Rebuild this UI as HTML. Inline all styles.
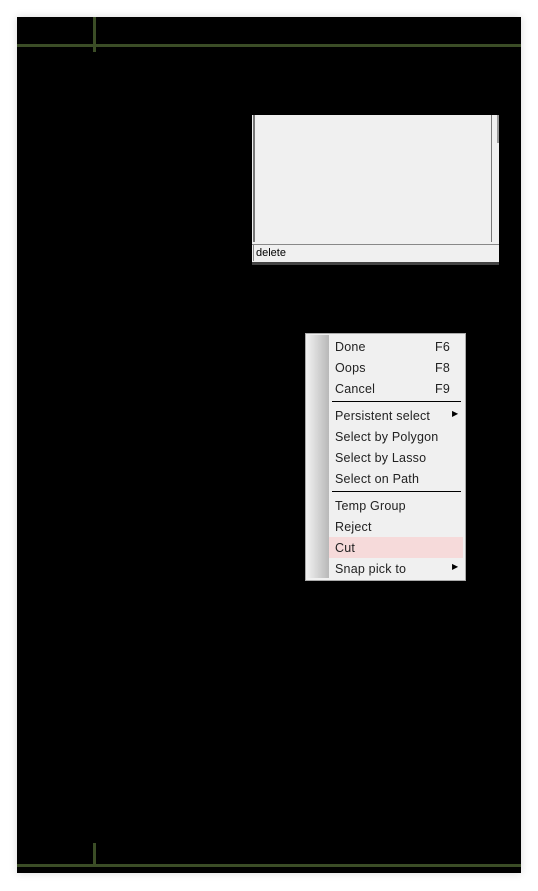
<!DOCTYPE html><html><head><style>
body{margin:0;width:538px;height:891px;background:#fff;position:relative;overflow:hidden;font-family:"Liberation Sans",sans-serif}
.a{position:absolute}
.m{font-size:12.5px;color:#222;left:335px;letter-spacing:0.2px}
</style></head><body>
<div class="a" style="left:17px;top:17px;width:504px;height:856px;background:#000;box-shadow:0 0 8px rgba(0,0,0,.15)"></div>
<div class="a" style="left:17px;top:44px;width:504px;height:3px;background:#3b4d26"></div>
<div class="a" style="left:93px;top:17px;width:3px;height:35px;background:#3b4d26"></div>
<div class="a" style="left:17px;top:864px;width:504px;height:3px;background:#3b4d26"></div>
<div class="a" style="left:93px;top:843px;width:3px;height:22px;background:#3b4d26"></div>
<div class="a" style="left:252px;top:115px;width:247px;height:148px;background:#f0f0f0"></div>
<div class="a" style="left:253px;top:115px;width:2px;height:127px;background:#777"></div>
<div class="a" style="left:491px;top:115px;width:1px;height:127px;background:#777"></div>
<div class="a" style="left:497px;top:115px;width:2px;height:28px;background:#999"></div>
<div class="a" style="left:252px;top:244px;width:247px;height:1px;background:#888"></div>
<div class="a" style="left:253px;top:245px;width:1px;height:16px;background:#888"></div>
<div class="a" style="left:252px;top:262px;width:247px;height:3px;background:#444"></div>
<div class="a" style="left:256px;top:247px;font-size:11px;color:#000">delete</div>
<div class="a" style="left:305px;top:333px;width:159px;height:246px;background:#f0f0f0;border:1px solid #aaa"></div>
<div class="a" style="left:307px;top:335px;width:22px;height:243px;background:linear-gradient(90deg,#f0f0f0,#b8b8b8)"></div>
<div class="a" style="left:329px;top:537px;width:134px;height:21px;background:#f6dada"></div>
<div class="a" style="left:332px;top:401px;width:129px;height:1px;background:#000"></div>
<div class="a" style="left:332px;top:491px;width:129px;height:1px;background:#000"></div>
<div class="a m" style="top:340px">Done</div><div class="a m" style="left:435px;top:340px">F6</div>
<div class="a m" style="top:361px">Oops</div><div class="a m" style="left:435px;top:361px">F8</div>
<div class="a m" style="top:382px">Cancel</div><div class="a m" style="left:435px;top:382px">F9</div>
<div class="a m" style="top:409px">Persistent select</div><div class="a" style="left:452px;top:409px;font-size:8px">▶</div>
<div class="a m" style="top:430px">Select by Polygon</div>
<div class="a m" style="top:451px">Select by Lasso</div>
<div class="a m" style="top:472px">Select on Path</div>
<div class="a m" style="top:499px">Temp Group</div>
<div class="a m" style="top:520px">Reject</div>
<div class="a m" style="top:541px">Cut</div>
<div class="a m" style="top:562px">Snap pick to</div><div class="a" style="left:452px;top:562px;font-size:8px">▶</div>
</body></html>
